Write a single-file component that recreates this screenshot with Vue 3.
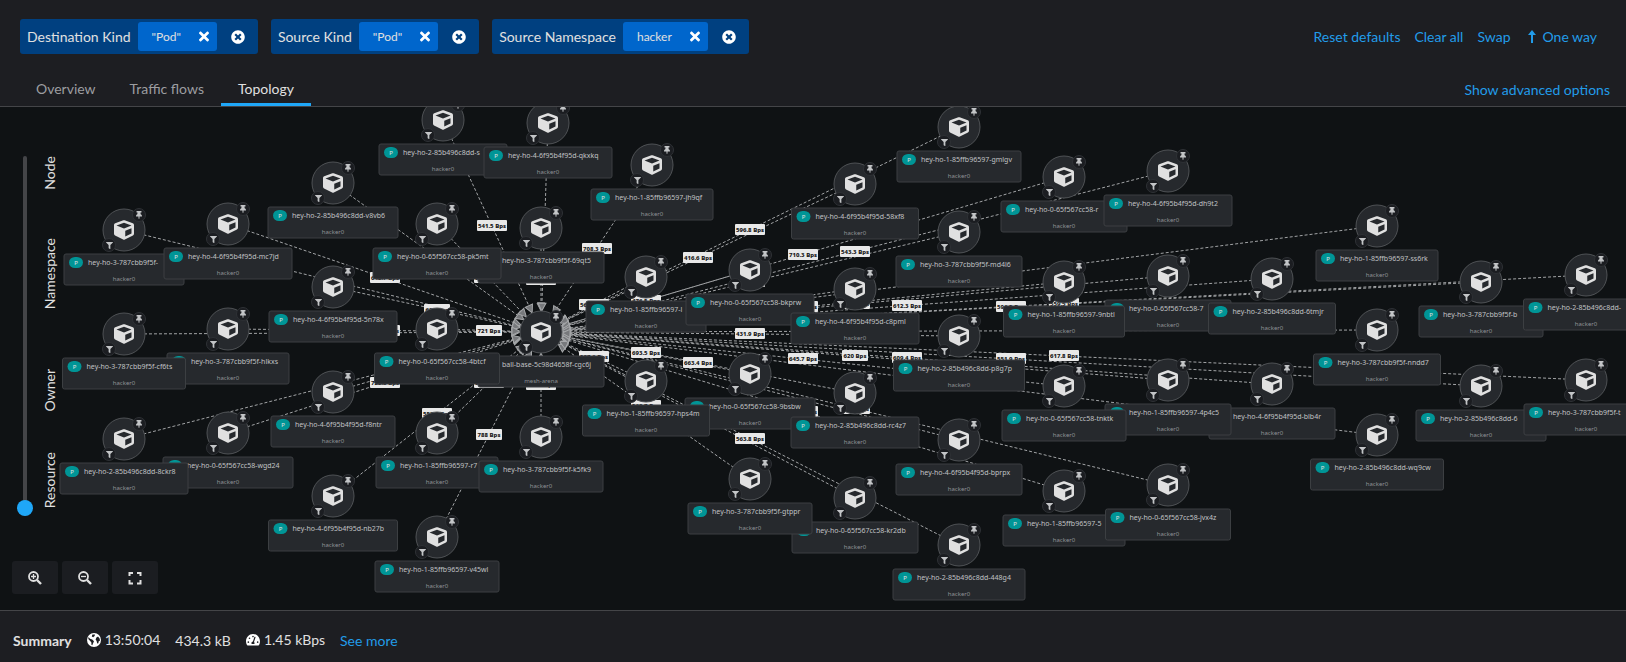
<script setup>
import { ref } from 'vue'

const filters = [
  { name: 'Destination Kind', value: '"Pod"' },
  { name: 'Source Kind', value: '"Pod"' },
  { name: 'Source Namespace', value: 'hacker' }
]
const tabs = ['Overview', 'Traffic flows', 'Topology']
const activeTab = ref('Topology')
const scopes = ['Node', 'Namespace', 'Owner', 'Resource']
const scope = ref(3)

const hub = { x: 541, y: 225 }

// [name, x, y, card width, edge label], listed from back to front
const pods = [
  ['hey-ho-3-787cbb9f5f-', 124, 123, 120, ''],
  ['hey-ho-3-787cbb9f5f-hlkxs', 228, 222, 122, '612.1'],
  ['hey-ho-0-65f567cc58-wgd24', 228, 326, 130, '722.8'],
  ['hey-ho-2-85b496c8dd-s', 443, 13, 128, '541.5'],
  ['hey-ho-3-787cbb9f5f-69qt5', 541, 121, 126, '580.2'],
  ['ball-base-5c98d4658f-cgc6j', 541, 225, 126, ''],
  ['hey-ho-1-85ffb96597-r7', 437, 326, 122, '636.4'],
  ['hey-ho-1-85ffb96597-l', 646, 170, 120, '563.3'],
  ['hey-ho-0-65f567cc58-bkprw', 750, 163, 128, '476.5'],
  ['hey-ho-0-65f567cc58-9bsbw', 750, 267, 130, '693.5'],
  ['hey-ho-0-65f567cc58-kr2db', 855, 391, 126, ''],
  ['hey-ho-0-65f567cc58-r', 1064, 70, 126, '710.3'],
  ['hey-ho-0-65f567cc58-7', 1168, 169, 126, '610.1'],
  ['hey-ho-4-6f95b4f95d-blb4r', 1272, 277, 126, '609.4'],
  ['hey-ho-1-85ffb96597-4p4c5', 1168, 273, 126, '620'],
  ['hey-ho-1-85ffb96597-5', 1064, 384, 122, '587.7'],
  ['hey-ho-3-787cbb9f5f-b', 1481, 175, 124, '596.2'],
  ['hey-ho-2-85b496c8dd-6', 1481, 279, 130, '551.9'],
  ['hey-ho-4-6f95b4f95d-mc7jd', 228, 117, 128, '642.7'],
  ['hey-ho-2-85b496c8dd-v8vb6', 333, 76, 130, ''],
  ['hey-ho-4-6f95b4f95d-5n78x', 333, 180, 128, '606'],
  ['hey-ho-3-787cbb9f5f-cf6ts', 124, 227, 123, ''],
  ['hey-ho-4-6f95b4f95d-f8ntr', 333, 285, 124, ''],
  ['hey-ho-2-85b496c8dd-8ckr8', 124, 332, 128, ''],
  ['hey-ho-4-6f95b4f95d-nb27b', 333, 389, 129, '553.2'],
  ['hey-ho-4-6f95b4f95d-qkxkq', 548, 16, 128, ''],
  ['hey-ho-1-85ffb96597-jh9qf', 652, 58, 122, '708.3'],
  ['hey-ho-0-65f567cc58-pk5mt', 437, 117, 128, '605.1'],
  ['hey-ho-0-65f567cc58-4btcf', 437, 222, 125, '721'],
  ['hey-ho-1-85ffb96597-hps4m', 646, 274, 127, '537.6'],
  ['hey-ho-3-787cbb9f5f-k5fk9', 541, 330, 124, '561.3'],
  ['hey-ho-1-85ffb96597-v45wl', 437, 430, 124, '788'],
  ['hey-ho-1-85ffb96597-gmlgv', 959, 20, 124, '596.8'],
  ['hey-ho-4-6f95b4f95d-58xf8', 855, 77, 127, '416.6'],
  ['hey-ho-3-787cbb9f5f-md4l6', 959, 125, 126, '580.4'],
  ['hey-ho-4-6f95b4f95d-c8pml', 855, 182, 128, ''],
  ['hey-ho-2-85b496c8dd-p8g7p', 959, 229, 131, '431.9'],
  ['hey-ho-2-85b496c8dd-rc4z7', 855, 286, 128, '663.4'],
  ['hey-ho-4-6f95b4f95d-bprpx', 959, 333, 126, ''],
  ['hey-ho-3-787cbb9f5f-gtppr', 750, 372, 124, '563.7'],
  ['hey-ho-2-85b496c8dd-448g4', 959, 438, 132, '563.8'],
  ['hey-ho-4-6f95b4f95d-dh9t2', 1168, 64, 128, '543.3'],
  ['hey-ho-1-85ffb96597-9nbtl', 1064, 175, 121, '672.5'],
  ['hey-ho-2-85b496c8dd-6tmjr', 1272, 172, 127, '612.3'],
  ['hey-ho-0-65f567cc58-tnktk', 1064, 279, 124, '645.7'],
  ['hey-ho-0-65f567cc58-jvx4z', 1168, 378, 125, '623.1'],
  ['hey-ho-1-85ffb96597-ss6rk', 1377, 119, 122, ''],
  ['hey-ho-3-787cbb9f5f-nndd7', 1377, 223, 127, ''],
  ['hey-ho-2-85b496c8dd-wq9cw', 1377, 328, 133, ''],
  ['hey-ho-2-85b496c8dd-', 1586, 168, 125, '559.5'],
  ['hey-ho-3-787cbb9f5f-t', 1586, 273, 124, '617.8']
].map(([name, x, y, w, rate]) => ({
  name, x, y, w, rate,
  owner: name.startsWith('ball') ? 'mesh-arena' : 'hacker0'
}))

const edges = pods
  .filter(p => p.owner === 'hacker0')
  .map(p => ({
    x: p.x,
    y: p.y,
    rate: p.rate,
    mx: Math.round((p.x + hub.x) / 2),
    my: Math.round((p.y + hub.y) / 2),
    lw: p.rate.length > 3 ? 30 : 26,
    angle: Math.atan2(p.y - hub.y, p.x - hub.x) * 180 / Math.PI
  }))
const labels = edges.filter(e => e.rate)
</script>

<template>
  <div class="page">
    <header class="toolbar">
      <div class="filters">
        <div v-for="f in filters" :key="f.name" class="group">
          <span class="group-name">{{ f.name }}</span>
          <span class="chip">
            <span class="chip-text">{{ f.value }}</span>
            <button class="icon-btn" :aria-label="'Remove ' + f.value">
              <svg width="10" height="15" viewBox="0 0 352 512"><path fill="currentColor" d="M242.72 256l100.07-100.07c12.28-12.28 12.28-32.19 0-44.48l-22.24-22.24c-12.28-12.28-32.19-12.28-44.48 0L176 189.28 75.93 89.21c-12.28-12.28-32.19-12.28-44.48 0L9.21 111.45c-12.28 12.28-12.28 32.19 0 44.48L109.28 256 9.21 356.07c-12.28 12.28-12.28 32.19 0 44.48l22.24 22.24c12.28 12.28 32.2 12.28 44.48 0L176 322.72l100.07 100.07c12.28 12.28 32.2 12.28 44.48 0l22.24-22.24c12.28-12.28 12.28-32.19 0-44.48L242.72 256z" /></svg>
            </button>
          </span>
          <button class="icon-btn clear" :aria-label="'Clear ' + f.name">
            <svg width="14" height="14" viewBox="0 0 512 512"><path fill="currentColor" d="M256 8C119 8 8 119 8 256s111 248 248 248 248-111 248-248S393 8 256 8zm121.6 313.1c4.7 4.7 4.7 12.3 0 17L338 377.6c-4.7 4.7-12.3 4.7-17 0L256 312l-65.1 65.6c-4.7 4.7-12.3 4.7-17 0L134.4 338c-4.7-4.7-4.7-12.3 0-17l65.6-65-65.6-65.1c-4.7-4.7-4.7-12.3 0-17l39.6-39.6c4.7-4.7 12.3-4.7 17 0l65 65.7 65.1-65.6c4.7-4.7 12.3-4.7 17 0l39.6 39.6c4.7 4.7 4.7 12.3 0 17L312 256l65.6 65.1z" /></svg>
          </button>
        </div>
      </div>
      <div class="actions">
        <button class="link">Reset defaults</button>
        <button class="link">Clear all</button>
        <button class="link">Swap</button>
        <button class="link way">
          <svg width="8" height="14" viewBox="0 0 8 14"><path d="M4 13V3" stroke="currentColor" stroke-width="2" /><path d="M4 0L8 5H0z" fill="currentColor" /></svg>
          One way
        </button>
      </div>
    </header>

    <nav class="tabs">
      <div class="tab-list" role="tablist">
        <button
          v-for="t in tabs" :key="t" role="tab" class="tab"
          :class="{ active: t === activeTab }" :aria-selected="t === activeTab"
          @click="activeTab = t"
        >{{ t }}</button>
      </div>
      <button class="link advanced">Show advanced options</button>
    </nav>

    <main class="canvas">
      <svg class="graph" aria-label="Topology">
        <defs>
          <g id="pod-icon">
            <circle r="21" fill="#26292d" stroke="#4f5255" />
            <svg x="-10" y="-10" width="20" height="20" viewBox="0 0 512 512"><path fill="#e0e0e0" d="M239.1 6.3l-208 78c-18.7 7-31.1 25-31.1 45v225.1c0 18.2 10.3 34.8 26.5 42.9l208 104c13.5 6.8 29.4 6.8 42.9 0l208-104c16.3-8.1 26.5-24.8 26.5-42.9V129.3c0-20-12.4-37.9-31.1-44.9l-208-78C262 2.2 250 2.2 239.1 6.3zM256 68.4l192 72v1.1l-192 78-192-78v-1.1l192-72zm32 356V275.5l160-65v133.9l-160 80z" /></svg>
            <circle cx="15" cy="-15" r="6.5" fill="#1b1d21" stroke="#2e3135" />
            <svg x="12" y="-19" width="6" height="8" viewBox="0 0 384 512"><path fill="#c3c5c7" d="M298.028 214.267L285.793 96H328c13.255 0 24-10.745 24-24V24c0-13.255-10.745-24-24-24H56C42.745 0 32 10.745 32 24v48c0 13.255 10.745 24 24 24h42.207L85.972 214.267C37.465 236.82 0 277.261 0 328c0 13.255 10.745 24 24 24h136v104.007c0 1.242.289 2.467.845 3.578l24 48c2.941 5.882 11.364 5.893 14.311 0l24-48a8.008 8.008 0 0 0 .845-3.578V352h136c13.255 0 24-10.745 24-24-.001-51.183-37.983-91.42-85.973-113.733z" /></svg>
            <circle cx="-15" cy="15" r="6.5" fill="#1b1d21" stroke="#2e3135" />
            <svg x="-18" y="12" width="7" height="7" viewBox="0 0 512 512"><path fill="#c3c5c7" d="M487.976 0H24.028C2.71 0-8.047 25.866 7.058 40.971L192 225.941V432c0 7.831 3.821 15.17 10.237 19.662l80 55.98C298.02 518.69 320 507.493 320 487.98V225.941l184.947-184.97C520.021 25.896 509.338 0 487.976 0z" /></svg>
          </g>
        </defs>

        <line v-for="(e, i) in edges" :key="'l' + i" class="edge" :x1="e.x" :y1="e.y" :x2="hub.x" :y2="hub.y" />
        <path
          v-for="(e, i) in edges" :key="'a' + i" class="arrow" d="M21 0L29 -4V4Z"
          :transform="`translate(${hub.x} ${hub.y}) rotate(${e.angle})`"
        />
        <g v-for="(e, i) in labels" :key="'r' + i" :transform="`translate(${e.mx} ${e.my})`">
          <rect class="rate-box" :x="-e.lw / 2" y="-6" :width="e.lw" height="11" rx="1" />
          <text class="rate" y="2">{{ e.rate }} Bps</text>
        </g>

        <g v-for="p in pods" :key="p.name + p.x + p.y" :transform="`translate(${p.x} ${p.y})`">
          <use href="#pod-icon" />
          <g :transform="`translate(${-p.w / 2} 24)`">
            <rect class="card" :width="p.w" height="31" rx="2" />
            <rect class="kind" x="5" y="3" width="14" height="11" rx="6" />
            <text class="kind-text" x="12" y="11">P</text>
            <text class="pod-name" x="24" y="11">{{ p.name }}</text>
            <text class="pod-owner" :x="p.w / 2" y="27">{{ p.owner }}</text>
          </g>
        </g>
      </svg>

      <div class="scope">
        <input v-model.number="scope" class="scope-range" type="range" min="0" max="3" step="1" aria-label="Scope" />
        <div class="scope-names">
          <span v-for="s in scopes" :key="s" class="scope-cell"><span class="scope-name">{{ s }}</span></span>
        </div>
      </div>

      <div class="zoom">
        <button class="zoom-btn" aria-label="Zoom in">
          <svg width="14" height="14" viewBox="0 0 14 14" fill="none" stroke="currentColor"><circle cx="5.5" cy="5.5" r="4.5" stroke-width="1.8" /><path d="M9 9L13 13" stroke-width="2.4" /><path d="M3 5.5H8M5.5 3V8" stroke-width="1.3" /></svg>
        </button>
        <button class="zoom-btn" aria-label="Zoom out">
          <svg width="14" height="14" viewBox="0 0 14 14" fill="none" stroke="currentColor"><circle cx="5.5" cy="5.5" r="4.5" stroke-width="1.8" /><path d="M9 9L13 13" stroke-width="2.4" /><path d="M3 5.5H8" stroke-width="1.3" /></svg>
        </button>
        <button class="zoom-btn" aria-label="Fit to screen">
          <svg width="14" height="14" viewBox="0 0 14 14" fill="none" stroke="currentColor" stroke-width="2"><path d="M1.5 5V2H5M9 2H12.5V5M12.5 9V12.5H9M5 12.5H1.5V9" /></svg>
        </button>
      </div>
    </main>

    <footer class="summary">
      <strong class="summary-title">Summary</strong>
      <span class="stat">
        <svg width="14" height="14" viewBox="0 0 14 14"><circle cx="7" cy="7" r="7" fill="#fff" /><path fill="#1d1e22" d="M1.5 4L3 5.8 5.2 6.6 7 8.2 6.2 10 5.3 12.3 4.4 11.8V9.4L3.2 8 1.3 6zM5.4 1.6L8 1.4 7.6 3 6.2 4.2 4.8 3.6zM9.4 4.6L11 3.4 12.6 5.6 13 7.6 11.6 8.4 11.4 10.2 10.2 10.4 9.6 8 8.6 6.4z" /></svg>
        13:50:04
      </span>
      <span class="stat low">434.3 kB</span>
      <span class="stat">
        <svg width="14" height="14" viewBox="0 0 576 512"><path fill="#fff" fill-rule="evenodd" d="M288 10C129 10 0 150 0 320c0 53 14 102 39 145 6 10 16 15 27 15h444c11 0 21-5 27-15 25-43 39-92 39-145C576 150 447 10 288 10zM288 80a34 34 0 1 1 0 68 34 34 0 0 1 0-68zM96 310a34 34 0 1 1 0 68 34 34 0 0 1 0-68zM144 150a34 34 0 1 1 0 68 34 34 0 0 1 0-68zM480 310a34 34 0 1 1 0 68 34 34 0 0 1 0-68zM391 152l-62 184c14 11 23 28 23 48 0 12-3 23-9 32H233c-6-9-9-20-9-32 0-34 26-61 60-64l61-184c4-12 18-19 31-15 12 4 19 18 15 31z" /></svg>
        1.45 kBps
      </span>
      <button class="link low">See more</button>
    </footer>
  </div>
</template>

<style>
body {
  background: #0f1214;
}
</style>

<style scoped>
.page {
  display: flex;
  flex-direction: column;
  min-height: 100vh;
  background: #1d1e22;
  color: #e0e0e0;
  font-family: Lato, "Open Sans", sans-serif;
  font-size: 14px;
  line-height: 20px;
}
button {
  border: 0;
  padding: 0;
  background: none;
  color: inherit;
  font: inherit;
  cursor: pointer;
}
svg {
  display: block;
}
.toolbar {
  display: flex;
  align-items: center;
  justify-content: space-between;
  padding: 19px 29px 16px 20px;
}
.filters {
  display: flex;
  gap: 13px;
}
.group {
  display: flex;
  align-items: center;
  padding: 3px 13px 3px 7px;
  border-radius: 3px;
  background: #004080;
}
.chip {
  display: flex;
  align-items: center;
  gap: 18px;
  margin: 0 14px 0 7px;
  padding: 0 8px 0 14px;
  height: 29px;
  border-radius: 3px;
  background: #0066cc;
}
.chip-text {
  font-size: 12px;
}
.icon-btn {
  color: #fff;
}
.actions {
  display: flex;
  gap: 14px;
}
.link {
  color: #229ce9;
}
.way {
  display: flex;
  align-items: center;
  gap: 7px;
  margin-left: 3px;
}
.tabs {
  display: flex;
  align-items: center;
  justify-content: space-between;
  padding: 0 16px 0 19px;
  border-bottom: 1px solid #444548;
}
.tab-list {
  display: flex;
}
.tab {
  padding: 9px 17px 4px;
  border-bottom: 3px solid transparent;
  color: #9c9da0;
}
.tab.active {
  border-color: #1fa7f8;
  color: #e0e0e0;
}
.advanced {
  padding-top: 4px;
}
.canvas {
  position: relative;
  flex: 1;
  min-height: 320px;
  overflow: hidden;
  background: #0f1214;
}
.graph {
  position: absolute;
  inset: 0;
  width: 100%;
  height: 100%;
  font-family: "Noto Sans", sans-serif;
}
.edge {
  stroke: #a2a4a6;
  stroke-width: 1;
  stroke-dasharray: 3 2;
}
.arrow {
  fill: #77797c;
  stroke: #a6a8aa;
}
.rate-box {
  fill: #e8e8e8;
}
.rate {
  fill: #151515;
  font-size: 6px;
  font-weight: 800;
  text-anchor: middle;
}
.card {
  fill: #26292d;
  stroke: #3c3f42;
}
.kind {
  fill: #009596;
}
.kind-text {
  fill: #e0e0e0;
  font-size: 6px;
  text-anchor: middle;
}
.pod-name {
  fill: #c0c2c4;
  font-size: 7px;
}
.pod-owner {
  fill: #8f9296;
  font-size: 6px;
  text-anchor: middle;
}
.scope {
  position: absolute;
  top: 49px;
  bottom: 94px;
  left: 17px;
  display: flex;
  gap: 7px;
}
.scope-range {
  appearance: none;
  writing-mode: vertical-lr;
  width: 16px;
  height: 100%;
  margin: 0;
  background: none;
}
.scope-range::-webkit-slider-runnable-track {
  width: 4px;
  border-radius: 2px;
  background: #444548;
}
.scope-range::-webkit-slider-thumb {
  appearance: none;
  width: 16px;
  height: 16px;
  margin-left: -6px;
  border-radius: 50%;
  background: #1fa7f8;
}
.scope-names {
  display: flex;
  flex-direction: column;
  padding-bottom: 8px;
}
.scope-cell {
  display: flex;
  flex: 2 1 0;
  align-items: center;
}
.scope-cell:first-child {
  flex-grow: 1;
  align-items: flex-start;
}
.scope-cell:last-child {
  flex-grow: 1;
  align-items: flex-end;
}
.scope-name {
  writing-mode: vertical-rl;
  transform: rotate(180deg);
}
.zoom {
  position: absolute;
  bottom: 16px;
  left: 12px;
  display: flex;
  gap: 4px;
}
.zoom-btn {
  display: flex;
  align-items: center;
  justify-content: center;
  width: 46px;
  height: 33px;
  border-radius: 3px;
  background: #1b1d21;
}
.summary {
  display: flex;
  align-items: center;
  gap: 15px;
  padding: 18px 13px 11px;
  border-top: 1px solid #444548;
}
.summary-title,
.low {
  padding-top: 2px;
}
.stat {
  display: flex;
  align-items: center;
  gap: 4px;
}
</style>
